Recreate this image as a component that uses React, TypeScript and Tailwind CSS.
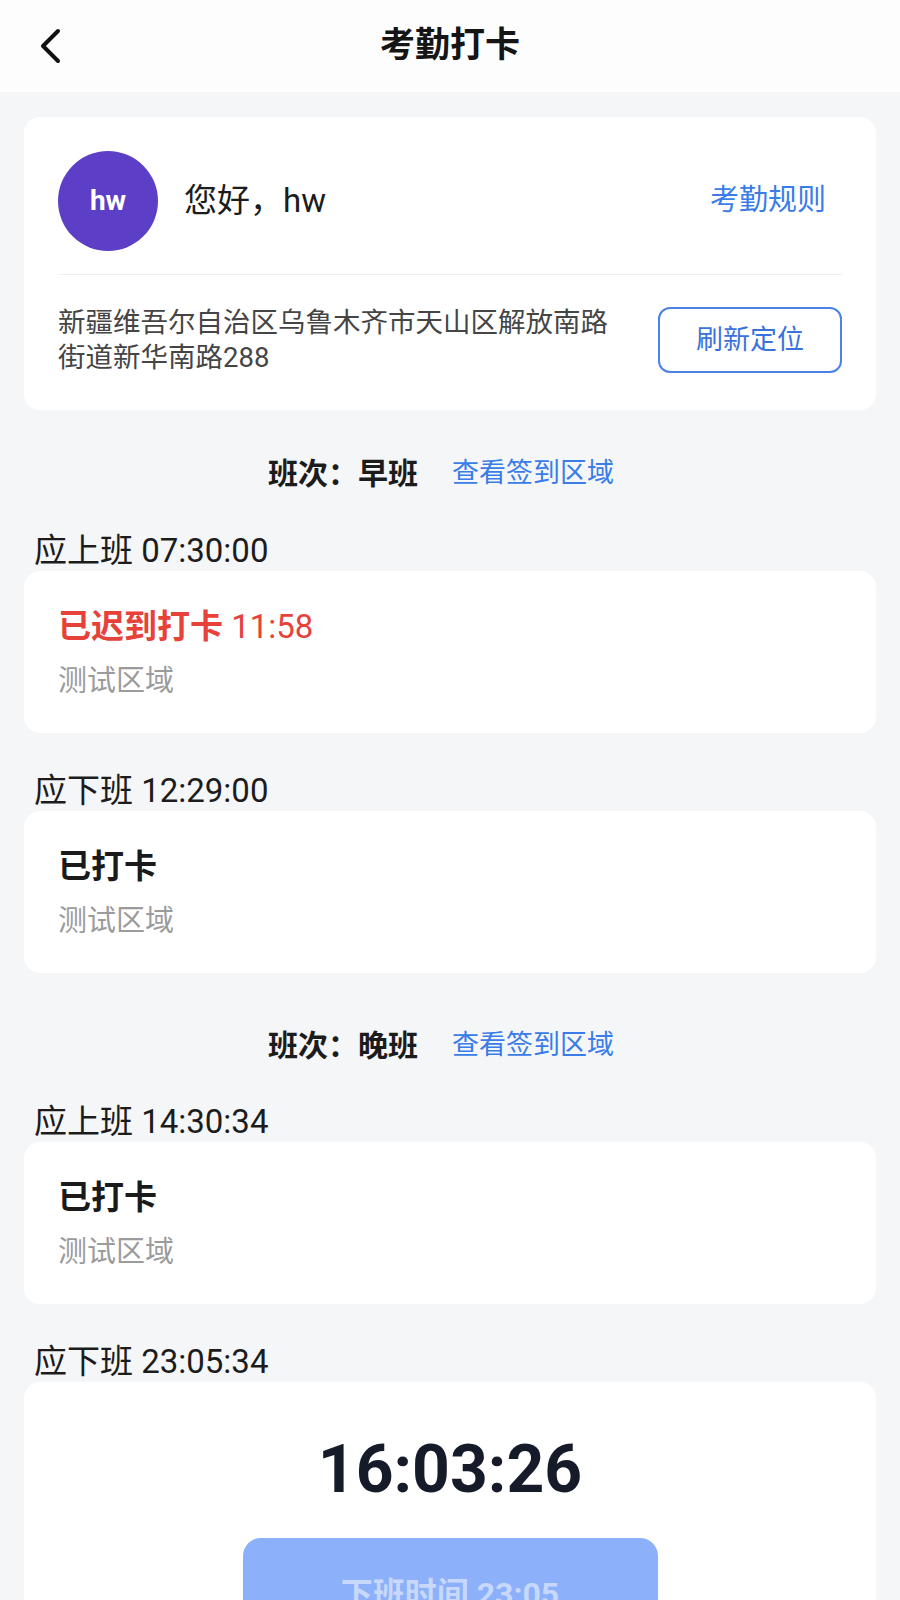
import React from "react";

const FONT = 'Roboto, "Noto Sans CJK SC", "Noto Sans", sans-serif';

function ShiftHeader({ name, className }: { name: string; className?: string }) {
  return (
    <div className={`flex h-10 items-center justify-center pr-[18px] ${className ?? ""}`}>
      <span className="text-[30px] font-bold text-[#1c1c1c]">班次：{name}</span>
      <span className="ml-[34px] text-[27px] text-[#3a7ce8]">查看签到区域</span>
    </div>
  );
}

function TimeBlock({
  label,
  title,
  titleClass,
}: {
  label: string;
  title: React.ReactNode;
  titleClass: string;
}) {
  return (
    <div className="mb-[38px]">
      <div className="h-10 pl-[10px] text-[33px] leading-10 text-[#1c1c1c]">{label}</div>
      <div className="rounded-2xl bg-white px-[34px] pb-[34px] pt-[36px]">
        <div className={`text-[33px] leading-10 font-bold ${titleClass}`}>{title}</div>
        <div className="mt-4 text-[29px] leading-9 text-[#9b9b9b]">测试区域</div>
      </div>
    </div>
  );
}

export default function App() {
  return (
    <div className="h-[1600px] overflow-hidden bg-[#f5f6f8]" style={{ fontFamily: FONT }}>
      {/* header */}
      <div className="relative flex h-[92px] items-center justify-center bg-[#fdfdfd]">
        <svg
          className="absolute left-[37px] top-[27px]"
          width="28"
          height="38"
          viewBox="0 0 28 38"
          fill="none"
        >
          <polyline
            points="21,4 6,19 21,34"
            stroke="#111"
            strokeWidth="4"
            strokeLinecap="round"
            strokeLinejoin="round"
          />
        </svg>
        <span className="text-[35px] font-bold text-[#151515]">考勤打卡</span>
      </div>

      <div className="px-6">
        {/* user card */}
        <div className="mt-[25px] rounded-2xl bg-white px-[34px] pb-[35px] pt-[34px]">
          <div className="flex items-center">
            <div className="flex h-[100px] w-[100px] items-center justify-center rounded-full bg-[#5c3fc6]">
              <span className="text-[28px] font-bold text-white">hw</span>
            </div>
            <span className="ml-[26px] text-[33px] text-[#1c1c1c]">您好，hw</span>
            <span className="ml-auto mr-[16px] text-[29px] text-[#3a7ce8]">考勤规则</span>
          </div>
          <div className="mt-[23px] h-px bg-[#eeeff1]" />
          <div className="mt-[30px] flex items-center">
            <div className="w-[558px] text-[27.5px] leading-[35px] text-[#454545]">
              新疆维吾尔自治区乌鲁木齐市天山区解放南路街道新华南路288
            </div>
            <div className="ml-auto flex h-[66px] w-[184px] items-center justify-center rounded-xl border-2 border-[#4a82e6] text-[27px] text-[#3a72dc]">
              刷新定位
            </div>
          </div>
        </div>

        <ShiftHeader name="早班" className="mb-[38px] mt-[43px]" />
        <TimeBlock
          label="应上班 07:30:00"
          title={<>已迟到打卡 <span className="font-normal">11:58</span></>}
          titleClass="text-[#e6423a]"
        />
        <TimeBlock label="应下班 12:29:00" title="已打卡" titleClass="text-[#1a1a1a]" />

        <ShiftHeader name="晚班" className="mb-[37px] mt-[52px]" />
        <TimeBlock label="应上班 14:30:34" title="已打卡" titleClass="text-[#1a1a1a]" />

        <div className="h-10 pl-[10px] text-[33px] leading-10 text-[#1c1c1c]">应下班 23:05:34</div>
        <div className="flex flex-col items-center rounded-2xl bg-white pt-[48px]">
          <div className="text-[66px] font-bold leading-[80px] text-[#151b28]">16:03:26</div>
          <div className="mt-[28px] flex h-[90px] w-[415px] items-start justify-center rounded-[18px] bg-[#8cb0fa] pt-[32px]">
            <span className="text-[32px] font-bold text-[#c8d8fb]">下班时间 23:05</span>
          </div>
          <div className="h-10" />
        </div>
      </div>
    </div>
  );
}
